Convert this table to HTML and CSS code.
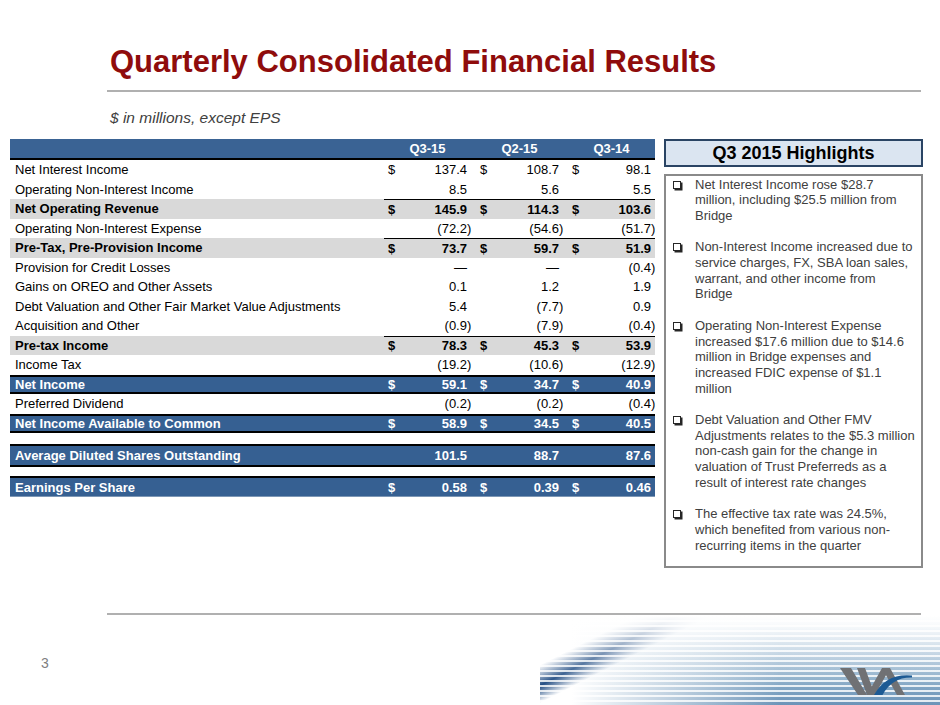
FILE: index.html
```html
<!DOCTYPE html>
<html lang="en">
<head>
<meta charset="utf-8">
<title>Quarterly Consolidated Financial Results</title>
<link rel="stylesheet" href="styles.css">
</head>
<body>
<div class="slide">
  <h1 class="title">Quarterly Consolidated Financial Results</h1>
  <div class="rule-top"></div>
  <p class="subtitle">$ in millions, except EPS</p>

  <div class="main">
    <div class="table">
      <div class="row hdr">
        <div class="lbl"></div>
        <div class="vals"><div class="hcell">Q3-15</div><div class="hcell">Q2-15</div><div class="hcell">Q3-14</div></div>
      </div>
      <div class="row">
        <div class="lbl">Net Interest Income</div>
        <div class="vals"><div class="cell"><span>$</span><span>137.4</span></div><div class="cell"><span>$</span><span>108.7</span></div><div class="cell"><span>$</span><span>98.1</span></div></div>
      </div>
      <div class="row">
        <div class="lbl">Operating Non-Interest Income</div>
        <div class="vals"><div class="cell"><span></span><span>8.5</span></div><div class="cell"><span></span><span>5.6</span></div><div class="cell"><span></span><span>5.5</span></div></div>
      </div>
      <div class="row gray">
        <div class="lbl">Net Operating Revenue</div>
        <div class="vals sep"><div class="cell"><span>$</span><span>145.9</span></div><div class="cell"><span>$</span><span>114.3</span></div><div class="cell"><span>$</span><span>103.6</span></div></div>
      </div>
      <div class="row">
        <div class="lbl">Operating Non-Interest Expense</div>
        <div class="vals"><div class="cell"><span></span><span class="neg">(72.2)</span></div><div class="cell"><span></span><span class="neg">(54.6)</span></div><div class="cell"><span></span><span class="neg">(51.7)</span></div></div>
      </div>
      <div class="row gray">
        <div class="lbl">Pre-Tax, Pre-Provision Income</div>
        <div class="vals sep"><div class="cell"><span>$</span><span>73.7</span></div><div class="cell"><span>$</span><span>59.7</span></div><div class="cell"><span>$</span><span>51.9</span></div></div>
      </div>
      <div class="row">
        <div class="lbl">Provision for Credit Losses</div>
        <div class="vals"><div class="cell"><span></span><span>—</span></div><div class="cell"><span></span><span>—</span></div><div class="cell"><span></span><span class="neg">(0.4)</span></div></div>
      </div>
      <div class="row">
        <div class="lbl">Gains on OREO and Other Assets</div>
        <div class="vals"><div class="cell"><span></span><span>0.1</span></div><div class="cell"><span></span><span>1.2</span></div><div class="cell"><span></span><span>1.9</span></div></div>
      </div>
      <div class="row">
        <div class="lbl">Debt Valuation and Other Fair Market Value Adjustments</div>
        <div class="vals"><div class="cell"><span></span><span>5.4</span></div><div class="cell"><span></span><span class="neg">(7.7)</span></div><div class="cell"><span></span><span>0.9</span></div></div>
      </div>
      <div class="row">
        <div class="lbl">Acquisition and Other</div>
        <div class="vals"><div class="cell"><span></span><span class="neg">(0.9)</span></div><div class="cell"><span></span><span class="neg">(7.9)</span></div><div class="cell"><span></span><span class="neg">(0.4)</span></div></div>
      </div>
      <div class="row gray">
        <div class="lbl">Pre-tax Income</div>
        <div class="vals sep"><div class="cell"><span>$</span><span>78.3</span></div><div class="cell"><span>$</span><span>45.3</span></div><div class="cell"><span>$</span><span>53.9</span></div></div>
      </div>
      <div class="row">
        <div class="lbl">Income Tax</div>
        <div class="vals"><div class="cell"><span></span><span class="neg">(19.2)</span></div><div class="cell"><span></span><span class="neg">(10.6)</span></div><div class="cell"><span></span><span class="neg">(12.9)</span></div></div>
      </div>
      <div class="row blue">
        <div class="lbl">Net Income</div>
        <div class="vals"><div class="cell"><span>$</span><span>59.1</span></div><div class="cell"><span>$</span><span>34.7</span></div><div class="cell"><span>$</span><span>40.9</span></div></div>
      </div>
      <div class="row">
        <div class="lbl">Preferred Dividend</div>
        <div class="vals"><div class="cell"><span></span><span class="neg">(0.2)</span></div><div class="cell"><span></span><span class="neg">(0.2)</span></div><div class="cell"><span></span><span class="neg">(0.4)</span></div></div>
      </div>
      <div class="row blue">
        <div class="lbl">Net Income Available to Common</div>
        <div class="vals"><div class="cell"><span>$</span><span>58.9</span></div><div class="cell"><span>$</span><span>34.5</span></div><div class="cell"><span>$</span><span>40.5</span></div></div>
      </div>
      <div class="row blue shares">
        <div class="lbl">Average Diluted Shares Outstanding</div>
        <div class="vals"><div class="cell"><span></span><span>101.5</span></div><div class="cell"><span></span><span>88.7</span></div><div class="cell"><span></span><span>87.6</span></div></div>
      </div>
      <div class="row blue eps">
        <div class="lbl">Earnings Per Share</div>
        <div class="vals"><div class="cell"><span>$</span><span>0.58</span></div><div class="cell"><span>$</span><span>0.39</span></div><div class="cell"><span>$</span><span>0.46</span></div></div>
      </div>
    </div>

    <div class="side">
      <div class="hl-head">Q3 2015 Highlights</div>
      <div class="hl-body">
        <div class="item"><span class="chk"><span class="box"></span></span><p>Net Interest Income rose $28.7<br>million, including $25.5 million from<br>Bridge</p></div>
        <div class="item"><span class="chk"><span class="box"></span></span><p>Non-Interest Income increased due to<br>service charges, FX, SBA loan sales,<br>warrant, and other income from<br>Bridge</p></div>
        <div class="item"><span class="chk"><span class="box"></span></span><p>Operating Non-Interest Expense<br>increased $17.6 million due to $14.6<br>million in Bridge expenses and<br>increased FDIC expense of $1.1<br>million</p></div>
        <div class="item"><span class="chk"><span class="box"></span></span><p>Debt Valuation and Other FMV<br>Adjustments relates to the $5.3 million<br>non-cash gain for the change in<br>valuation of Trust Preferreds as a<br>result of interest rate changes</p></div>
        <div class="item"><span class="chk"><span class="box"></span></span><p>The effective tax rate was 24.5%,<br>which benefited from various non-<br>recurring items in the quarter</p></div>
      </div>
    </div>
  </div>

  <div class="rule-bot"></div>
  <div class="footer">
    <div class="pagenum">3</div>
    <div class="deco">
      <svg class="logo" viewBox="0 0 100 40" width="100" height="40" aria-label="WA logo">
        <polygon fill="#707174" points="15,6 26,6 42,33 33,33"/>
        <polygon fill="#707174" points="32,6 40,6 50,33 42,33"/>
        <polygon fill="#707174" points="42,33 50,33 65,6 57,6"/>
        <polygon fill="#707174" points="57,6 65,6 80,33 72,33"/>
        <path fill="#1d5a94" d="M49,33 Q61,11 87,13.5 L87,15.5 Q67,15 57.5,33 Z"/>
      </svg>
    </div>
  </div>
</div>
</body>
</html>
```

FILE: styles.css
```css
html, body {
  margin: 0;
  padding: 0;
}
body {
  width: 940px;
  height: 705px;
  overflow: hidden;
  background: #fff;
  font-family: "Liberation Sans", Arial, sans-serif;
  color: #000;
}
.slide {
  display: flex;
  flex-direction: column;
  height: 705px;
}
.title {
  margin: 0;
  padding: 44px 0 0 110px;
  font-size: 31px;
  line-height: 36px;
  font-weight: bold;
  color: #8f0c0c;
}
.rule-top {
  margin: 10px 0 0 107px;
  width: 814px;
  height: 2px;
  background: #b0b0b0;
}
.subtitle {
  margin: 16px 0 0 110px;
  font-size: 15.5px;
  line-height: 20px;
  font-style: italic;
  color: #404040;
}
.main {
  display: flex;
  gap: 9px;
  margin-top: 11px;
  padding-left: 10px;
  height: 429px;
}
.table {
  width: 645px;
  font-size: 13px;
}
.row {
  display: flex;
  height: 19.5px;
  box-sizing: border-box;
  align-items: stretch;
}
.lbl {
  flex: 1;
  padding-left: 5px;
  display: flex;
  align-items: center;
  white-space: nowrap;
}
.vals {
  width: 271px;
  display: grid;
  grid-template-columns: repeat(3, 87px);
  column-gap: 5px;
  box-sizing: border-box;
}
.cell {
  display: flex;
  justify-content: space-between;
  align-items: center;
  padding: 0 4px;
}
.neg {
  margin-right: -4.3px;
}
.hcell {
  display: flex;
  align-items: center;
  justify-content: center;
}
.sep {
  border-top: 1.5px solid #000;
}
.hdr {
  height: 21px;
  background: #3a6394;
  border-bottom: 2px solid #000;
  color: #fff;
  font-weight: bold;
}
.gray {
  background: #d9d9d9;
  font-weight: bold;
}
.blue {
  background: #366092;
  color: #fff;
  font-weight: bold;
  border-top: 2px solid #000;
  border-bottom: 2px solid #000;
}
.shares {
  height: 23.5px;
  margin-top: 10.5px;
}
.eps {
  height: 21px;
  margin-top: 9px;
  border-bottom: 1px solid #7d97b5;
}
.side {
  width: 259px;
  display: flex;
  flex-direction: column;
}
.hl-head {
  height: 28px;
  box-sizing: border-box;
  border: 2px solid #2a4464;
  background: #dbe5f1;
  font-size: 18px;
  line-height: 24px;
  font-weight: bold;
  text-align: center;
}
.hl-body {
  margin-top: 7px;
  height: 394px;
  box-sizing: border-box;
  border: 2px solid #8a8a8a;
  padding: 0.5px 0 0 7px;
  color: #404040;
  font-size: 13px;
  line-height: 15.7px;
}
.item {
  display: flex;
  margin-bottom: 15.7px;
}
.item p {
  margin: 0;
  white-space: nowrap;
}
.chk {
  flex: none;
  width: 22px;
}
.box {
  display: block;
  margin-top: 4px;
  width: 6px;
  height: 6px;
  border: 1px solid #262626;
  box-shadow: 1.5px 1.5px 0 #262626;
}
.rule-bot {
  margin: 45px 0 0 107px;
  width: 814px;
  height: 2px;
  background: #b0b0b0;
}
.footer {
  display: flex;
  height: 90px;
}
.pagenum {
  padding: 40px 0 0 41px;
  font-size: 14px;
  line-height: 16px;
  color: #7f7f7f;
}
.deco {
  position: relative;
  margin-left: auto;
  width: 400px;
  height: 90px;
  background:
    linear-gradient(to bottom, #fff 0%, rgba(255,255,255,0.92) 10%, rgba(255,255,255,0.3) 50%, rgba(255,255,255,0) 80%),
    repeating-linear-gradient(to bottom, rgba(255,255,255,0.82) 0 2px, rgba(255,255,255,0) 2px 5px),
    linear-gradient(153deg, rgba(28,72,128,0) 17%, rgba(28,72,128,1) 24%, rgba(28,72,128,0) 30%),
    linear-gradient(to right, #fff 0%, #fff 8%, rgba(255,255,255,0) 60%),
    linear-gradient(to bottom, #bcd1e2, #86a9c6 75%, #6c94b8);
}
.logo {
  position: absolute;
  left: 285px;
  top: 47px;
}
```
